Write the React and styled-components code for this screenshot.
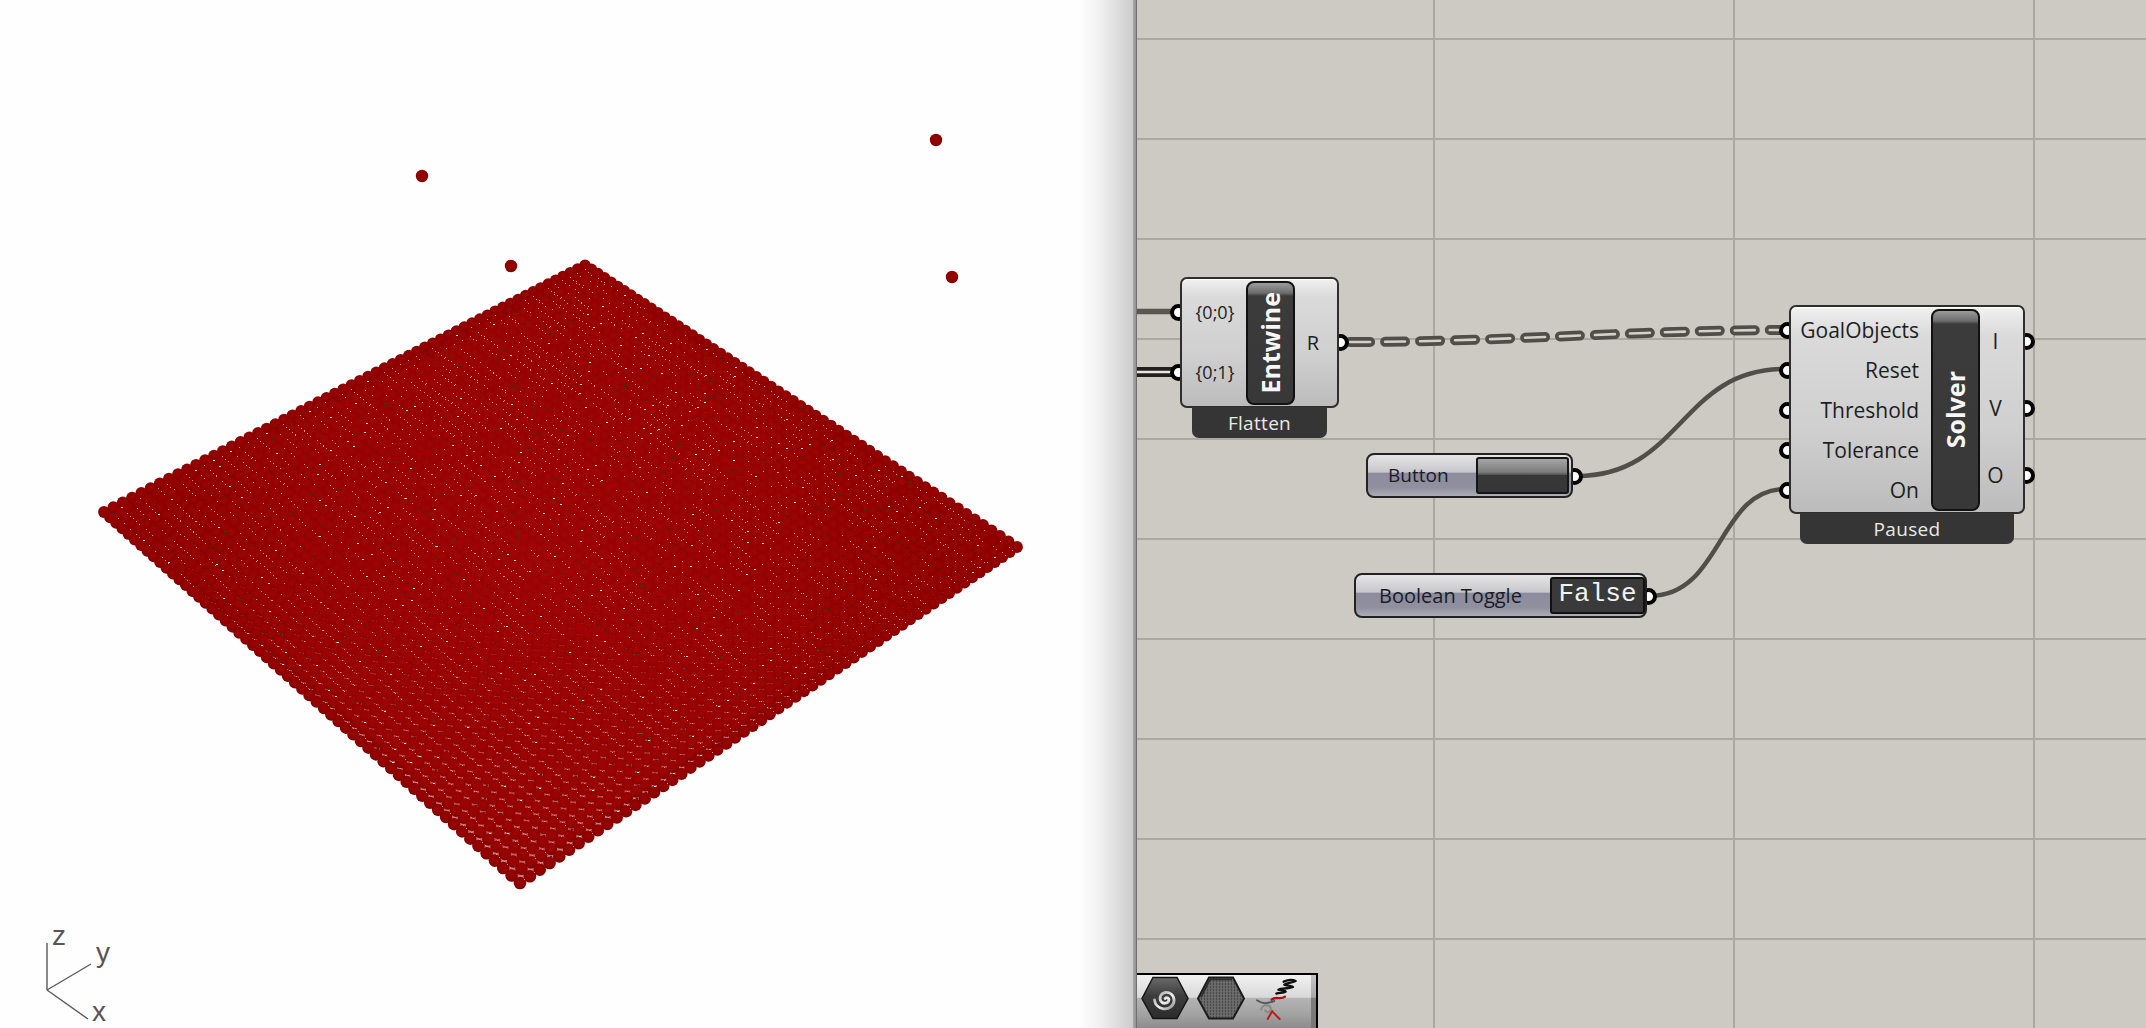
import React, { useMemo } from "react";
import styled, { createGlobalStyle } from "styled-components";

const GlobalStyle = createGlobalStyle`
  html, body {
    margin: 0;
    padding: 0;
    background: #fff;
    overflow: hidden;
  }
`;

const Page = styled.div`
  display: flex;
  width: 2146px;
  height: 1028px;
  overflow: hidden;
  font-family: "Open Sans", "Noto Sans", sans-serif;
`;

/* ---------- rhino viewport ---------- */
const Viewport = styled.div`
  width: 1133px;
  height: 100%;
  background: linear-gradient(
    to right,
    #fefefe 0,
    #fefefe 1078px,
    #f6f6f6 1092px,
    #e8e8e8 1108px,
    #d8d8d8 1122px,
    #cccccc 1133px
  );
`;
const ViewSvg = styled.svg`
  display: block;
  width: 1133px;
  height: 1028px;
`;
const AxisLabel = styled.text`
  font-family: "Liberation Sans", sans-serif;
  font-size: 28px;
  fill: #555;
`;
const Divider = styled.div`
  width: 4px;
  height: 100%;
  background: linear-gradient(to right, #a6a6a6 0, #9a9a9a 60%, #5c5c60 100%);
`;

/* ---------- grasshopper canvas ---------- */
const Canvas = styled.div`
  position: relative;
  flex: 1;
  height: 100%;
  background-color: #cdc9c3;
  background-image: linear-gradient(to right, #aca7a0 2px, transparent 2px),
    linear-gradient(to bottom, #aca7a0 2px, transparent 2px);
  background-size: 300px 100px;
  background-position: 296px 38px;
`;
const Wires = styled.svg`
  position: absolute;
  left: 0;
  top: 0;
  width: 1009px;
  height: 1028px;
`;
const Node = styled.div`
  position: absolute;
  left: ${(p) => p.$x - 1137}px;
  top: ${(p) => p.$y}px;
  width: ${(p) => p.$w}px;
  isolation: isolate;
`;
const Body = styled.div`
  box-sizing: border-box;
  display: flex;
  height: ${(p) => p.$h}px;
  padding: 2px 0 1px;
  border: 2px solid #2e2e2e;
  border-radius: 7px;
  background: linear-gradient(
    to bottom,
    #f2f2f2 0,
    #e6e6e6 6%,
    #dadada 14%,
    #cfcfcf 60%,
    #bcbcbc 100%
  );
  box-shadow: inset 0 1px 0 #fff;
`;
const Column = styled.div`
  display: flex;
  flex-direction: column;
  width: ${(p) => p.$w}px;
  flex: ${(p) => (p.$w ? "none" : 1)};
  margin-top: ${(p) => p.$mt ?? -2}px;
  padding-bottom: ${(p) => p.$pb || 0}px;
`;
const Row = styled.div`
  position: relative;
  flex: 1;
  display: flex;
  align-items: center;
  box-sizing: border-box;
  padding: ${(p) => p.$pad || "0"};
  justify-content: ${(p) => p.$justify || "center"};
  font-size: ${(p) => p.$size || 18}px;
  color: #1e1e1e;
  white-space: nowrap;
`;
const Port = styled.span`
  position: absolute;
  z-index: -1;
  top: 50%;
  ${(p) => (p.$right ? "right" : "left")}: ${(p) => p.$off || -12}px;
  width: 17px;
  height: 17px;
  margin-top: -8px;
  box-sizing: border-box;
  border: 4px solid #000;
  border-radius: 50%;
  background: #fff;
`;
const Bar = styled.div`
  flex: none;
  box-sizing: border-box;
  width: 49px;
  display: flex;
  align-items: center;
  justify-content: center;
  border: 2px solid #111;
  border-radius: 8px;
  background: linear-gradient(
    to bottom,
    #9c9c9c 0,
    #6c6c6c 10px,
    #3b3b3b 13px,
    #383838 100%
  );
`;
const BarText = styled.span`
  writing-mode: vertical-rl;
  transform: rotate(180deg);
  font-size: 25px;
  font-weight: 700;
  line-height: 1;
  color: #f6f6f6;
`;
const Footer = styled.div`
  margin: -1px ${(p) => p.$inset}px 0;
  height: ${(p) => p.$h || 31}px;
  display: flex;
  align-items: center;
  justify-content: center;
  background: #353535;
  border-radius: 0 0 7px 7px;
  font-size: 19px;
  letter-spacing: 0.3px;
  color: #e9e9e9;
`;
const Param = styled.div`
  box-sizing: border-box;
  display: flex;
  align-items: stretch;
  height: ${(p) => p.$h}px;
  padding: 2px;
  border: 2px solid #222;
  border-radius: 8px;
  background: linear-gradient(
    to bottom,
    #e4e4e6 0,
    #c8c8cc 42%,
    #8c8c9c 44%,
    #90909f 80%,
    #adadb8 100%
  );
`;
const ParamLabel = styled.span`
  flex: 1;
  display: flex;
  align-items: center;
  padding-bottom: 1px;
  padding-left: ${(p) => p.$pad}px;
  font-size: ${(p) => p.$size}px;
  color: #1b1b28;
  white-space: nowrap;
`;
const ButtonFace = styled.div`
  width: 93px;
  box-sizing: border-box;
  border: 2px solid #151515;
  border-radius: 3px;
  background: linear-gradient(
    to bottom,
    #a5a5a5 0,
    #7c7c7c 40%,
    #565656 47%,
    #383838 50%,
    #363636 100%
  );
`;
const ToggleFace = styled.div`
  width: 95px;
  margin-right: -2px;
  box-sizing: border-box;
  display: flex;
  align-items: center;
  justify-content: center;
  padding-bottom: 3px;
  border: 2px solid #111;
  border-radius: 3px;
  background: #3a3a3a;
  font-family: "Liberation Mono", monospace;
  font-size: 26px;
  line-height: 1;
  color: #f2f2f2;
`;
const Toolbar = styled.div`
  position: absolute;
  left: 0;
  bottom: 0;
  box-sizing: border-box;
  width: 181px;
  height: 55px;
  display: flex;
  align-items: center;
  gap: 8px;
  padding: 0 0 7px 4px;
  border-top: 2px solid #000;
  border-right: 2px solid #000;
  background: linear-gradient(
    to bottom,
    #f1f1f1 0,
    #d9d9d9 42%,
    #b4b4b4 44%,
    #a2a2a2 75%,
    #8c8c8c 100%
  );
`;
const ToolIcon = styled.svg`
  display: block;
  flex: none;
  align-self: ${(p) => p.$align || "center"};
  width: ${(p) => p.$w}px;
  height: ${(p) => p.$h}px;
`;
const ToolEnd = styled.div`
  margin: 0 0 -7px auto;
  align-self: stretch;
  width: 12px;
  background: linear-gradient(
    to bottom,
    #c4c4c4 0,
    #a8a8a8 42%,
    #7d7d7d 44%,
    #777 100%
  );
`;

/* maps the unit square onto the four corners of the point grid */
const homography = ([p0, p1, p2, p3]) => {
  const dx1 = p1[0] - p2[0];
  const dx2 = p3[0] - p2[0];
  const sx = p0[0] - p1[0] + p2[0] - p3[0];
  const dy1 = p1[1] - p2[1];
  const dy2 = p3[1] - p2[1];
  const sy = p0[1] - p1[1] + p2[1] - p3[1];
  const den = dx1 * dy2 - dx2 * dy1;
  const g = (sx * dy2 - dx2 * sy) / den;
  const h = (dx1 * sy - sx * dy1) / den;
  const a = p1[0] - p0[0] + g * p1[0];
  const b = p3[0] - p0[0] + h * p3[0];
  const d = p1[1] - p0[1] + g * p1[1];
  const e = p3[1] - p0[1] + h * p3[1];
  return (u, v) => {
    const w = g * u + h * v + 1;
    return [(a * u + b * v + p0[0]) / w, (d * u + e * v + p0[1]) / w];
  };
};

const CORNERS = [
  [585, 265],
  [1017, 547],
  [520, 883],
  [104, 512],
];
const COUNT = 58;
const LONE_POINTS = [
  [422, 176],
  [936, 140],
  [511, 266],
  [952, 277],
];

const noise = (i, j) => {
  const s = Math.sin(i * 12.9898 + j * 78.233) * 43758.5453;
  return s - Math.floor(s);
};

const useParticles = () =>
  useMemo(() => {
    const map = homography(CORNERS);
    const balls = [];
    let pink = "";
    let white = "";
    let dark = "";
    for (let i = 0; i <= COUNT; i++) {
      for (let j = 0; j <= COUNT; j++) {
        const [x, y] = map(i / COUNT, j / COUNT);
        balls.push({ x, y, r: 5.6 + ((y - 261) / 626) * 0.7, key: `${i}-${j}` });
        if (i < COUNT && j < COUNT) {
          const [fx, fy] = map((i + 0.5) / COUNT, (j + 0.5) / COUNT);
          const cx = Math.round(fx);
          const cy = Math.round(fy);
          const n = noise(i, j);
          if (n < 0.62) {
            // specks run in short diagonal streaks
            pink += `M${cx} ${cy}h1v1h-1z`;
            if (n < 0.36) pink += `M${cx + 3} ${cy + 3}h1v1h-1z`;
            if (n < 0.16) pink += `M${cx + 6} ${cy + 6}h1v1h-1z`;
          } else if (n < 0.7) {
            white += `M${cx} ${cy}h2v1h-2z`;
          } else if (n < 0.82) {
            dark += `M${cx} ${cy}h2v1h-2z`;
          }
        }
      }
    }
    balls.sort((p, q) => p.y - q.y);
    return { balls, pink, white, dark };
  }, []);

const ParticleField = () => {
  const { balls, pink, white, dark } = useParticles();
  return (
    <ViewSvg viewBox="0 0 1133 1028">
      <defs>
        <radialGradient id="ball" cx="50%" cy="45%" r="55%">
          <stop offset="0%" stopColor="#980404" />
          <stop offset="75%" stopColor="#8e0000" />
          <stop offset="100%" stopColor="#6e0000" />
        </radialGradient>
        <radialGradient
          id="glow"
          gradientUnits="userSpaceOnUse"
          cx="540"
          cy="570"
          r="400"
        >
          <stop offset="0%" stopColor="#b00808" stopOpacity="0.4" />
          <stop offset="60%" stopColor="#a80606" stopOpacity="0.3" />
          <stop offset="100%" stopColor="#a00404" stopOpacity="0" />
        </radialGradient>
      </defs>
      <polygon points={CORNERS.join(" ")} fill="#cf7878" />
      {balls.map((b) => (
        <circle key={b.key} cx={b.x} cy={b.y} r={b.r} fill="url(#ball)" />
      ))}
      <polygon points="586,275 1000,547 520,872 125,512" fill="url(#glow)" />
      <g shapeRendering="crispEdges">
        <path d={pink} fill="#e88a8a" />
        <path d={white} fill="#ffe6e6" />
        <path d={dark} fill="#3a2424" />
      </g>
      {LONE_POINTS.map(([x, y]) => (
        <circle key={x} cx={x} cy={y} r="6.2" fill="url(#ball)" />
      ))}
      <g stroke="#5a5a5a" strokeWidth="1.4" fill="none">
        <path d="M47 990V943" />
        <path d="M47 990L91 964" />
        <path d="M47 990L88 1019" />
      </g>
      <AxisLabel x="52" y="945">z</AxisLabel>
      <AxisLabel x="96" y="962">y</AxisLabel>
      <AxisLabel x="92" y="1021">x</AxisLabel>
    </ViewSvg>
  );
};

const WireLayer = () => (
  <Wires viewBox="1137 0 1009 1028">
    <g fill="none" stroke="#514e49" strokeWidth="4.5">
      <path d="M1137 311.5H1178" strokeWidth="5.5" stroke="#5a5650" />
      <path d="M1137 372H1176" strokeWidth="10" stroke="#23211f" />
      <path d="M1137 372H1176" strokeWidth="2.4" stroke="#e8e6e2" />
      <path d="M1577 476C1682 476 1680 369 1785 369" />
      <path d="M1650 596C1722 596 1718 489 1785 489" />
      <path
        d="M1350 342C1500 342 1640 330 1785 330"
        strokeWidth="10"
        strokeDasharray="20 15"
        strokeLinecap="round"
      />
      <path
        d="M1350 342C1500 342 1640 330 1785 330"
        strokeWidth="2.6"
        strokeDasharray="20 15"
        strokeLinecap="round"
        stroke="#d4d0ca"
      />
    </g>
  </Wires>
);

const hexPoints = "1,22 12,1 36,1 47,22 36,42 12,42";

const SpiralIcon = () => (
  <ToolIcon $w={48} $h={44} viewBox="0 0 48 43">
    <defs>
      <linearGradient id="hexSteel" x1="0" y1="0" x2="0" y2="1">
        <stop offset="0%" stopColor="#6a6a6a" />
        <stop offset="45%" stopColor="#3c3c3c" />
        <stop offset="100%" stopColor="#2c2c2c" />
      </linearGradient>
      <linearGradient id="spiralSteel" x1="0" y1="0" x2="1" y2="1">
        <stop offset="0%" stopColor="#9a9a9a" />
        <stop offset="55%" stopColor="#f2f2f2" />
        <stop offset="100%" stopColor="#8a8a8a" />
      </linearGradient>
    </defs>
    <polygon points={hexPoints} fill="url(#hexSteel)" stroke="#161616" strokeWidth="1.5" />
    <path
      d="M24 22c1.6-1.8 4.6-.4 3.8 2.2-.9 3-5.6 3.4-7.6.9-2.5-3.2-.6-8 3.3-9 5-1.2 9.6 2.4 9.6 7.6 0 5.4-5 9.6-10.8 8.6-5-.9-8.4-4.6-8.8-9"
      fill="none"
      stroke="url(#spiralSteel)"
      strokeWidth="2.8"
      strokeLinecap="round"
    />
  </ToolIcon>
);

const MeshIcon = () => (
  <ToolIcon $w={48} $h={44} viewBox="0 0 48 43">
    <defs>
      <pattern id="hexDots" width="3" height="3" patternUnits="userSpaceOnUse">
        <rect width="3" height="3" fill="#6d6d6d" />
        <circle cx="1.5" cy="1.5" r="0.8" fill="#2f2f2f" />
      </pattern>
    </defs>
    <polygon points={hexPoints} fill="url(#hexDots)" stroke="#1b1b1b" strokeWidth="2" />
    <path d="M4 21L13 3H35" fill="none" stroke="#2c2c2c" strokeWidth="1.6" />
  </ToolIcon>
);

const HelixIcon = () => (
  <ToolIcon $w={50} $h={53} $align="flex-start" viewBox="400 76 150 159">
    <g fill="none" strokeLinecap="round" strokeLinejoin="round">
      <path d="M492 96C505 90 520 90 528 94C515 100 500 100 494 105C505 110 518 108 520 112C505 118 485 115 476 120C488 124 498 122 498 126C490 132 480 128 470 132" stroke="#0e0e0e" strokeWidth="7" />
      <path d="M456 150C468 138 482 152 496 141" stroke="#a81212" strokeWidth="7" />
      <path d="M412 152C430 166 446 160 464 154" stroke="#5a5a5a" strokeWidth="6" />
      <path d="M424 180C430 160 452 166 454 176C454 190 442 190 436 182" stroke="#8a8a8a" strokeWidth="6" />
      <path d="M458 184L444 208M458 186L480 208" stroke="#c01818" strokeWidth="6" />
    </g>
  </ToolIcon>
);

const App = () => (
  <Page>
    <GlobalStyle />
    <Viewport>
      <ParticleField />
    </Viewport>
    <Divider />
    <Canvas>
      <WireLayer />

      <Node $x={1180} $y={277} $w={159}>
        <Body $h={131}>
          <Column $w={64} $mt={1} $pb={3}>
            <Row $pad="0 0 0 2px">
              <Port />
              {"{0;0}"}
            </Row>
            <Row $pad="0 0 0 2px">
              <Port />
              {"{0;1}"}
            </Row>
          </Column>
          <Bar>
            <BarText>Entwine</BarText>
          </Bar>
          <Column>
            <Row $pad="0 6px 0 0" $size={20}>
              <Port $right />R
            </Row>
          </Column>
        </Body>
        <Footer $inset={12}>Flatten</Footer>
      </Node>

      <Node $x={1789} $y={305} $w={236}>
        <Body $h={209}>
          <Column $w={140} $mt={1} $pb={1}>
            {["GoalObjects", "Reset", "Threshold", "Tolerance", "On"].map((name) => (
              <Row key={name} $justify="flex-end" $pad="0 12px 0 0" $size={21}>
                <Port />
                {name}
              </Row>
            ))}
          </Column>
          <Bar>
            <BarText>Solver</BarText>
          </Bar>
          <Column $mt={-1} $pb={3}>
            {["I", "V", "O"].map((name) => (
              <Row key={name} $pad="0 12px 0 0" $size={21}>
                <Port $right />
                {name}
              </Row>
            ))}
          </Column>
        </Body>
        <Footer $inset={11}>Paused</Footer>
      </Node>

      <Node $x={1366} $y={453} $w={207}>
        <Port $right $off={-10} />
        <Param $h={45}>
          <ParamLabel $pad={18} $size={19}>Button</ParamLabel>
          <ButtonFace />
        </Param>
      </Node>

      <Node $x={1354} $y={573} $w={293}>
        <Port $right $off={-10} />
        <Param $h={45}>
          <ParamLabel $pad={21} $size={20}>Boolean Toggle</ParamLabel>
          <ToggleFace>False</ToggleFace>
        </Param>
      </Node>

      <Toolbar>
        <SpiralIcon />
        <MeshIcon />
        <HelixIcon />
        <ToolEnd />
      </Toolbar>
    </Canvas>
  </Page>
);

export default App;
